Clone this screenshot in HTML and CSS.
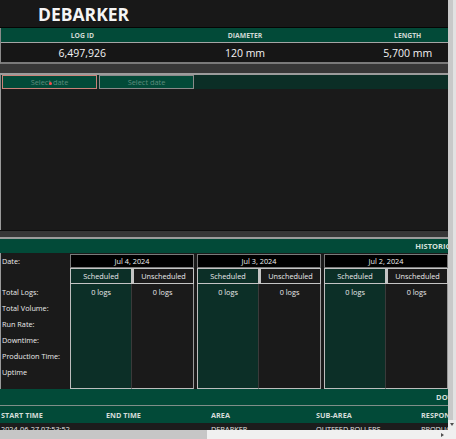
FILE: index.html
```html
<!DOCTYPE html>
<html lang="en">
<head>
<meta charset="utf-8">
<title>Debarker</title>
<link rel="stylesheet" href="styles.css">
</head>
<body>
<div class="window">
  <div class="viewport">
    <div class="page">
      <header class="title-bar"><h1>DEBARKER</h1></header>

      <section class="log-info">
        <div class="log-row log-head">
          <div>LOG ID</div><div>DIAMETER</div><div>LENGTH</div>
        </div>
        <div class="log-row log-values">
          <div>6,497,926</div><div>120 mm</div><div>5,700 mm</div>
        </div>
      </section>

      <div class="band band-tall"></div>

      <div class="filters">
        <div class="date-input active">Select date<span class="cursor-dot"></span></div>
        <div class="date-input">Select date</div>
      </div>

      <div class="chart"></div>

      <div class="band band-short"></div>

      <section class="historical">
        <div class="section-title">HISTORICAL PRODUCTION LOG</div>
        <div class="hist-body">
          <div class="labels">
            <div class="label date-label">Date:</div>
            <div class="label spacer"></div>
            <div class="label">Total Logs:</div>
            <div class="label">Total Volume:</div>
            <div class="label">Run Rate:</div>
            <div class="label">Downtime:</div>
            <div class="label">Production Time:</div>
            <div class="label">Uptime</div>
          </div>
          <div class="days">
            <div class="day">
              <div class="day-date">Jul 4, 2024</div>
              <div class="day-cols">
                <div class="col-head sched">Scheduled</div>
                <div class="col-head unsched">Unscheduled</div>
                <div class="col-body sched">0 logs</div>
                <div class="col-body unsched">0 logs</div>
              </div>
            </div>
            <div class="day">
              <div class="day-date">Jul 3, 2024</div>
              <div class="day-cols">
                <div class="col-head sched">Scheduled</div>
                <div class="col-head unsched">Unscheduled</div>
                <div class="col-body sched">0 logs</div>
                <div class="col-body unsched">0 logs</div>
              </div>
            </div>
            <div class="day">
              <div class="day-date">Jul 2, 2024</div>
              <div class="day-cols">
                <div class="col-head sched">Scheduled</div>
                <div class="col-head unsched">Unscheduled</div>
                <div class="col-body sched">0 logs</div>
                <div class="col-body unsched">0 logs</div>
              </div>
            </div>
            <div class="day">
              <div class="day-date">Jul 1, 2024</div>
              <div class="day-cols">
                <div class="col-head sched">Scheduled</div>
                <div class="col-head unsched">Unscheduled</div>
                <div class="col-body sched">0 logs</div>
                <div class="col-body unsched">0 logs</div>
              </div>
            </div>
          </div>
        </div>
      </section>

      <section class="downtime">
        <div class="section-title">DOWNTIME EVENTS</div>
        <div class="dt-row dt-head">
          <div>START TIME</div><div>END TIME</div><div>AREA</div><div>SUB-AREA</div><div>RESPONSIBILITY</div><div>REASON</div><div>DURATION</div><div>SHIFT</div><div>COMMENTS</div>
        </div>
        <div class="dt-row dt-data">
          <div>2024-06-27 07:53:52</div><div></div><div>DEBARKER</div><div>OUTFEED ROLLERS</div><div>PRODUCTION</div><div></div><div></div><div></div><div></div>
        </div>
      </section>
    </div>
  </div>

  <div class="vscroll">
    <div class="vthumb"></div>
    <div class="arrow arrow-down"></div>
  </div>
  <div class="hscroll">
    <div class="hthumb"></div>
    <div class="hspace"></div>
    <div class="arrow arrow-right"></div>
  </div>
  <div class="corner"></div>
</div>
</body>
</html>
```

FILE: styles.css
```css
* { box-sizing: border-box; }

html, body {
  margin: 0;
  padding: 0;
  background: #1a1a1a;
  overflow: hidden;
}

body {
  font-family: "Open Sans", "Noto Sans", sans-serif;
  color: #f2f2f2;
}

/* Browser window frame with scrollbars */
.window {
  width: 456px;
  height: 439px;
  display: grid;
  grid-template-columns: 448px 8px;
  grid-template-rows: 430px 9px;
}
.viewport {
  overflow: hidden;
  background: #1a1a1a;
}
.vscroll {
  background: #ededed;
  display: flex;
  flex-direction: column;
  align-items: center;
}
.vthumb {
  width: 8px;
  height: 420px;
  background: #c9c9c9;
  border-right: 3px solid #e2e2e2;
}
.hscroll {
  background: #f0f0f0;
  display: flex;
  align-items: center;
}
.hthumb {
  width: 207px;
  height: 9px;
  background: #c6c6c6;
}
.hspace { flex: 1; }
.corner { background: #f0f0f0; }

.arrow {
  width: 0;
  height: 0;
}
.arrow-down {
  margin-top: 3px;
  border-left: 2px solid transparent;
  border-right: 2px solid transparent;
  border-top: 3px solid #505050;
}
.arrow-right {
  margin-right: 4px;
  border-top: 2px solid transparent;
  border-bottom: 2px solid transparent;
  border-left: 3px solid #505050;
}

.page {
  width: 945px;
}

/* Title */
.title-bar {
  height: 28px;
  background: #181818;
  border-bottom: 1px solid #050505;
  padding: 3px 0 0 38px;
  display: flex;
  align-items: center;
}
.title-bar h1 {
  margin: 0;
  font-size: 17.5px;
  line-height: 1;
  font-weight: 700;
  color: #f5f5f5;
}

/* Log info */
.log-info {
  width: 489px;
  border-left: 1px solid #8a8a8a;
  border-bottom: 2px solid #7a7a7a;
}
.log-row {
  display: grid;
  grid-template-columns: repeat(3, 1fr);
  align-items: center;
  text-align: center;
}
.log-head {
  height: 15px;
  background: #024a38;
  border-bottom: 1px solid #a5a5a5;
  font-size: 6.8px;
  font-weight: 700;
  color: #cfd8d4;
}
.log-values {
  height: 19px;
  background: #161616;
  font-size: 10.5px;
  color: #f4f4f4;
}

/* Bands */
.band {
  background: #373737;
  border-bottom: 2px solid #9c9c9c;
}
.band-tall { height: 11px; }
.band-short {
  height: 9px;
  border-top: 1px solid #0f0f0f;
}

/* Filters */
.filters {
  height: 14px;
  display: flex;
  gap: 2px;
  padding-left: 1px;
  background: #0b2e26;
  border-left: 1px solid #8a8a8a;
}
.date-input {
  position: relative;
  width: 95px;
  height: 14px;
  background: #024a38;
  border: 1px solid #8a8a8a;
  color: #5f8c7d;
  font-size: 7.4px;
  line-height: 12px;
  text-align: center;
}
.date-input.active {
  border-color: #c98279;
}
.cursor-dot {
  position: absolute;
  left: 46px;
  top: 6px;
  width: 3px;
  height: 3px;
  border-radius: 50%;
  background: #ff4a4a;
}

/* Chart */
.chart {
  height: 141px;
  background: #1a1a1a;
  border-left: 1px solid #9a9a9a;
}

/* Section titles */
.section-title {
  background: #024a38;
  color: #d6e0dc;
  font-size: 7.5px;
  font-weight: 700;
  text-align: center;
}

/* Historical */
.historical .section-title {
  height: 14px;
  line-height: 14px;
}
.hist-body {
  display: flex;
  height: 136px;
  border-left: 1px solid #9a9a9a;
  padding-top: 1px;
}
.labels {
  width: 69px;
  display: flex;
  flex-direction: column;
}
.label {
  height: 16px;
  line-height: 16px;
  font-size: 7.3px;
  color: #ececec;
  padding-left: 1px;
}
.date-label {
  height: 14px;
  line-height: 14px;
}
.days {
  display: flex;
  gap: 3px;
}
.day {
  width: 124px;
  display: flex;
  flex-direction: column;
}
.day-date {
  height: 14px;
  line-height: 12px;
  background: #000;
  border: 1px solid #7a7a7a;
  font-size: 7.3px;
  text-align: center;
  color: #f0f0f0;
}
.day-cols {
  flex: 1;
  display: grid;
  grid-template-columns: 62px 62px;
  grid-template-rows: 16px 1fr;
}
.col-head {
  border: 1px solid #c4c4c4;
  font-size: 7.3px;
  line-height: 14px;
  text-align: center;
  color: #eaeaea;
}
.col-body {
  border: 1px solid #bdbdbd;
  border-top: none;
  font-size: 7.3px;
  line-height: 16px;
  text-align: center;
  color: #eaeaea;
}
.sched { background: #0c2f27; }
.unsched { background: #1a1a1a; }
.col-body.sched { border-right-color: #3a3a3a; }
.col-body.unsched { border-left: none; border-right-color: #9a9a9a; }
.col-head.unsched { border-left-width: 2px; }

/* Downtime */
.downtime .section-title {
  height: 17px;
  line-height: 16px;
  border-bottom: 1px solid #7f8f89;
}
.dt-row {
  display: grid;
  grid-template-columns: repeat(9, 105px);
  align-items: center;
}
.dt-row > div {
  padding-left: 1px;
  white-space: nowrap;
  overflow: hidden;
}
.dt-head {
  height: 17px;
  background: #024a38;
  font-size: 7.3px;
  font-weight: 700;
  color: #d4dcd9;
}
.dt-data {
  height: 17px;
  align-items: start;
  padding-top: 1px;
  background: #1c1c1c;
  font-size: 7.3px;
  line-height: 10px;
  color: #e8e8e8;
}
```
